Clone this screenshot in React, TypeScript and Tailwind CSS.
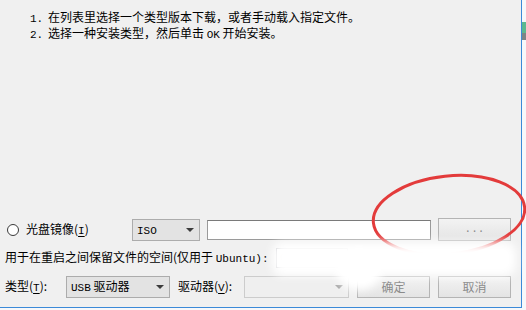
import React from "react";

const mono = "font-['Liberation_Mono',monospace] text-[11px]";

function Lat({ children }: { children: React.ReactNode }) {
    return <span className={mono}>{children}</span>;
}

function Caret({ disabled }: { disabled?: boolean }) {
    return (
        <svg width="8" height="4" viewBox="0 0 8 4" className="shrink-0">
            <path d="M0 0h8L4 4z" fill={disabled ? "#a8a8a8" : "#3c3c3c"} />
        </svg>
    );
}

function Combo({ w, children, disabled }: { w: string; children?: React.ReactNode; disabled?: boolean }) {
    return (
        <div
            className={
                "flex h-[22px] shrink-0 items-center justify-between border pl-[4px] pr-[5px] " +
                w +
                (disabled ? " border-[#cccccc] bg-[#efefef]" : " border-[#acacac] bg-[#e3e3e3]")
            }
        >
            <span className="leading-none">{children}</span>
            <Caret disabled={disabled} />
        </div>
    );
}

function Btn({ children }: { children: React.ReactNode }) {
    return (
        <div className="flex h-[22px] w-[73px] shrink-0 items-center justify-center border border-[#b4b4b4] bg-gradient-to-b from-[#f3f3f3] to-[#e4e4e4] text-[#8a8a8a]">
            {children}
        </div>
    );
}

export default function App() {
    return (
        <div className="relative flex h-[310px] w-[526px] overflow-hidden bg-[#f7f8fa] font-['Noto_Sans_CJK_SC','Noto_Sans',sans-serif] text-[12px] text-black">
            {/* dialog body */}
            <div className="flex h-[308px] w-[522px] shrink-0 flex-col border-r border-b border-[#3b8ad8] bg-[#f0f0f0]">
                <div className="pl-[30px] pt-[10px] leading-[13px]">
                    <div>
                        <span className={"inline-block w-[18px] " + mono}>1.</span>
                        在列表里选择一个类型版本下载，或者手动载入指定文件。
                    </div>
                    <div>
                        <span className={"inline-block w-[18px] " + mono}>2.</span>
                        选择一种安装类型，然后单击 <Lat>OK</Lat> 开始安装。
                    </div>
                </div>

                <div className="flex-1" />

                <div className="flex flex-col pb-[9px]">
                    {/* disc image row */}
                    <div className="flex h-[23px] items-center">
                        <div className="ml-[7px] flex w-[125px] items-center gap-[7px]">
                            <span className="h-[12px] w-[12px] rounded-full border border-[#3a3a3a] bg-white" />
                            <span>
                                光盘镜像(<span className="underline underline-offset-2">
                                    <Lat>I</Lat>
                                </span>)
                            </span>
                        </div>
                        <Combo w="w-[68px]">
                            <Lat>ISO</Lat>
                        </Combo>
                        <div className="ml-[7px] h-[20px] w-[224px] shrink-0 border border-[#9a9a9a] border-t-[#7a7a7a] bg-white" />
                        <div className="ml-[7px]">
                            <div className="flex h-[23px] w-[73px] items-center justify-center border border-[#b4b4b4] bg-gradient-to-b from-[#f3f3f3] to-[#e4e4e4] text-[#8a8a8a]">
                                <Lat>...</Lat>
                            </div>
                        </div>
                    </div>

                    {/* persistence row */}
                    <div className="mt-[7px] flex h-[20px] items-center">
                        <div className="w-[276px] shrink-0 pl-[5px]">
                            用于在重启之间保留文件的空间(仅用于 <Lat>Ubuntu):</Lat>
                        </div>
                        <div className="flex h-[20px] w-[72px] items-center border border-[#abadb3] bg-white pl-[3px] text-[#999]">
                            <Lat>0</Lat>
                        </div>
                    </div>

                    {/* type row */}
                    <div className="mt-[8px] flex h-[22px] items-center">
                        <div className="w-[66px] shrink-0 pl-[5px]">
                            类型(<span className="underline underline-offset-2"><Lat>T</Lat></span>):
                        </div>
                        <Combo w="w-[104px]">
                            <Lat>USB</Lat> 驱动器
                        </Combo>
                        <div className="w-[74px] shrink-0 pl-[8px]">
                            驱动器(<span className="underline underline-offset-2"><Lat>V</Lat></span>):
                        </div>
                        <Combo w="w-[105px]" disabled />
                        <div className="ml-[8px]">
                            <Btn>确定</Btn>
                        </div>
                        <div className="ml-[8px]">
                            <Btn>取消</Btn>
                        </div>
                    </div>
                </div>
            </div>

            {/* edge of window behind */}
            <div className="flex flex-1 flex-col pt-[22px]">
                <div className="h-[11px] bg-[#5db88f]" />
                <div className="h-[7px] bg-[#7d8585]" />
            </div>

            {/* red annotation */}
            <svg className="pointer-events-none absolute left-0 top-0" width="526" height="310">
                <ellipse
                    cx="449"
                    cy="215"
                    rx="76"
                    ry="39"
                    transform="rotate(-6 449 215)"
                    fill="none"
                    stroke="#e33b3b"
                    strokeWidth="3"
                />
            </svg>

            {/* watermark fog */}
            <div className="pointer-events-none absolute left-[272px] top-[242px] h-[34px] w-[244px] rounded-[10px] bg-white blur-[5px]" />
            <div className="pointer-events-none absolute left-[336px] top-[248px] h-[42px] w-[46px] rounded-full bg-white blur-[4px]" />
        </div>
    );
}
